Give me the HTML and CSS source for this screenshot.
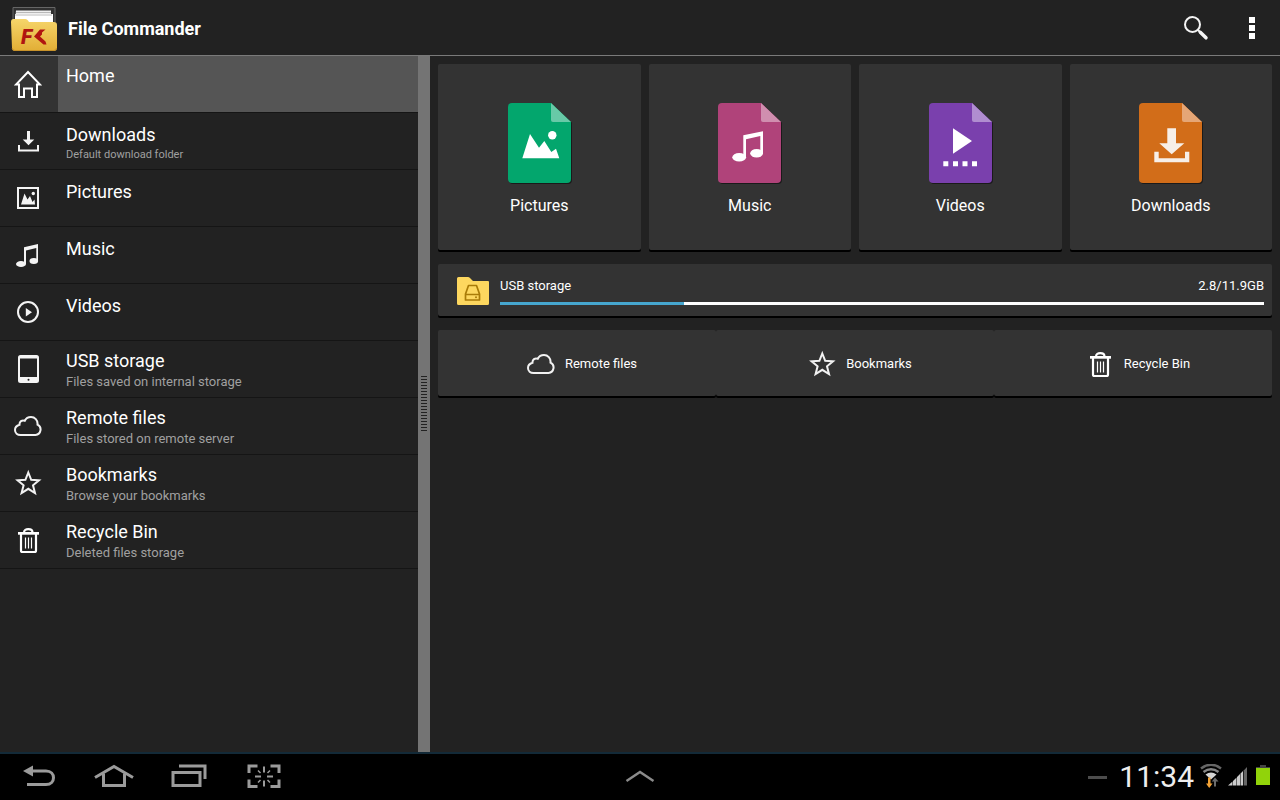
FILE: index.html
```html
<!DOCTYPE html>
<html lang="en">
<head>
<meta charset="utf-8">
<title>File Commander</title>
<link rel="stylesheet" href="styles.css">
</head>
<body>
<svg class="sprite" aria-hidden="true">
  <symbol id="cloud" viewBox="0 0 28 28">
    <path d="M6.500 23H21.500A5.500 5.500 0 0 0 23.500 12.600C24 8 20.700 5 17 5C14 5 11.800 6.700 10.800 8.800C8 7.600 5.200 9.600 5.500 12.700C2.500 13.600 1 15.700 1 18C1 21 3.500 23 6.500 23Z" fill="none" stroke="#f2f2f2" stroke-width="2"/>
  </symbol>
  <symbol id="star" viewBox="0 0 28 28">
    <path d="M14.300 3.500L17.200 10.800L25 11.300L19 16.300L21 24L14.300 19.800L7.600 24L9.600 16.300L3.600 11.300L11.400 10.800Z" fill="none" stroke="#f2f2f2" stroke-width="2"/>
  </symbol>
  <symbol id="bin" viewBox="0 0 28 28">
    <path d="M10 6.500C10 2 18.500 2 18.500 6.500" fill="none" stroke="#fff" stroke-width="2.200"/>
    <path d="M4 6H25V8.700H4Z" fill="#fff"/>
    <path d="M7 8V24.500Q7 26 8.500 26H20.500Q22 26 22 24.500V8" fill="none" stroke="#fff" stroke-width="2.200"/>
    <path d="M11.500 11.500V22.500M14.500 11.500V22.500M17.500 11.500V22.500" stroke="#fff" stroke-width="1.200"/>
  </symbol>
</svg>

<div class="screen">
  <header class="topbar">
    <svg class="logo" viewBox="0 0 46 46" aria-hidden="true">
      <defs>
        <linearGradient id="gold" x1="0" y1="0" x2="0" y2="1">
          <stop offset="0" stop-color="#f6d56a"/><stop offset="1" stop-color="#e2ae35"/>
        </linearGradient>
      </defs>
      <path d="M2 14V1.500H44V16" fill="#303030" stroke="#666" stroke-width="1"/>
      <path d="M5 4.500H40V18H4Z" fill="#eee"/>
      <path d="M4 8H42V20H4Z" fill="#fff"/>
      <path d="M5 6.500H40M4 9H41" stroke="#aaa" stroke-width=".8"/>
      <path d="M0 16Q0 13 2.500 13H14.500Q16 13 17 14.500L18 16H43Q46 16 46 19V42Q46 45 43 45H4Q1 45 1 42Z" fill="url(#gold)"/>
      <path d="M1 42Q2 44.500 4 44.500H43Q45 44 45.500 42" fill="none" stroke="#c8922a"/>
      <text class="logo-letter" x="10" y="38" fill="#b01510">F</text>
      <path d="M34.500 23.500H29L23 30.500L32.500 38.500H35.500L34.500 35.500L29 30.500L31 28.500V26.500Z" fill="#b01510"/>
    </svg>
    <h1 class="app-title">File Commander</h1>
    <div class="top-actions">
      <button class="top-button" aria-label="Search">
        <svg width="26" height="26" viewBox="0 0 26 26"><circle cx="9.500" cy="9.500" r="7.500" fill="none" stroke="#f4f4f4" stroke-width="2"/><path d="M14.500 14.500L17.500 17.500" stroke="#f4f4f4" stroke-width="2"/><path d="M17.300 17.300L23 22.800" stroke="#f4f4f4" stroke-width="3.500" stroke-linecap="round"/></svg>
      </button>
      <button class="top-button" aria-label="More options">
        <svg width="6" height="22" viewBox="0 0 6 22"><path d="M0 0H6V6H0ZM0 8H6V14H0ZM0 16H6V22H0Z" fill="#fff"/></svg>
      </button>
    </div>
  </header>

  <div class="workspace">
    <nav class="sidebar" aria-label="Locations">
      <a class="place place-active" href="#home">
        <span class="place-icon"><svg viewBox="0 0 28 28"><path d="M14 2L26 14.500H23V27H18V18.500H10V27H5V14.500H2Z" fill="none" stroke="#fff" stroke-width="2"/></svg></span>
        <span class="place-text place-single"><span class="place-title">Home</span></span>
      </a>
      <a class="place" href="#downloads">
        <span class="place-icon"><svg viewBox="0 0 28 28"><path d="M13 4H16V12.500H20.300L14.500 18.300L8.700 12.500H13Z" fill="#f4f4f4"/><path d="M5 18V23.500H24V18" fill="none" stroke="#f4f4f4" stroke-width="2"/></svg></span>
        <span class="place-text place-compact"><span class="place-title">Downloads</span><span class="place-note">Default download folder</span></span>
      </a>
      <a class="place" href="#pictures">
        <span class="place-icon"><svg viewBox="0 0 28 28"><path d="M4 4H24V24H4Z" fill="none" stroke="#f4f4f4" stroke-width="2"/><path d="M7 20.500L10.500 9.500L13.500 15.500L16 12L18.500 18L20.500 15.500L21 20.500Z" fill="#f4f4f4"/><circle cx="19.300" cy="9.500" r="1.700" fill="#f4f4f4"/></svg></span>
        <span class="place-text place-single"><span class="place-title">Pictures</span></span>
      </a>
      <a class="place" href="#music">
        <span class="place-icon"><svg viewBox="0 0 28 28"><path d="M10 6.300L24 3V20H22.300V7L12 9.500V23H10Z" fill="#f4f4f4"/><ellipse cx="7" cy="23" rx="5" ry="3" fill="#f4f4f4"/><ellipse cx="19.800" cy="20" rx="4.300" ry="3" fill="#f4f4f4"/></svg></span>
        <span class="place-text place-single"><span class="place-title">Music</span></span>
      </a>
      <a class="place" href="#videos">
        <span class="place-icon"><svg viewBox="0 0 28 28"><circle cx="14" cy="14" r="10" fill="none" stroke="#f4f4f4" stroke-width="2"/><path d="M11.800 10L18 14.200L11.800 18.400Z" fill="#f4f4f4"/></svg></span>
        <span class="place-text place-single"><span class="place-title">Videos</span></span>
      </a>
      <a class="place" href="#usb">
        <span class="place-icon"><svg viewBox="0 0 28 28"><path fill-rule="evenodd" d="M6.500 0H22.500Q25 0 25 2.500V25.500Q25 28 22.500 28H6.500Q4 28 4 25.500V2.500Q4 0 6.500 0ZM6 3.500V22H23V3.500Z" fill="#f4f4f4"/><circle cx="14.500" cy="24.700" r="1" fill="#222"/></svg></span>
        <span class="place-text"><span class="place-title">USB storage</span><span class="place-note">Files saved on internal storage</span></span>
      </a>
      <a class="place" href="#remote">
        <span class="place-icon"><svg viewBox="0 0 28 28"><use href="#cloud"/></svg></span>
        <span class="place-text"><span class="place-title">Remote files</span><span class="place-note">Files stored on remote server</span></span>
      </a>
      <a class="place" href="#bookmarks">
        <span class="place-icon"><svg viewBox="0 0 28 28"><use href="#star"/></svg></span>
        <span class="place-text"><span class="place-title">Bookmarks</span><span class="place-note">Browse your bookmarks</span></span>
      </a>
      <a class="place" href="#recycle">
        <span class="place-icon"><svg viewBox="0 0 28 28"><use href="#bin"/></svg></span>
        <span class="place-text"><span class="place-title">Recycle Bin</span><span class="place-note">Deleted files storage</span></span>
      </a>
    </nav>

    <div class="splitter"><span class="grip"></span></div>

    <main class="content">
      <div class="tiles">
        <button class="tile panel">
          <svg class="file-icon" viewBox="0 0 63 80"><path d="M4 0H43L63 19V76Q63 80 59 80H4Q0 80 0 76V4Q0 0 4 0Z" fill="#03a66d"/><path d="M43 0L63 19H45Q43 19 43 17Z" fill="#68c9a7"/><path d="M14.300 55.300L22 31L31 44.700L36.300 38L43.300 49L48 45.700L51.300 55.300Z" fill="#fff"/><circle cx="44.300" cy="32.300" r="4.200" fill="#fff"/></svg>
          <span>Pictures</span>
        </button>
        <button class="tile panel">
          <svg class="file-icon" viewBox="0 0 63 80"><path d="M4 0H43L63 19V76Q63 80 59 80H4Q0 80 0 76V4Q0 0 4 0Z" fill="#b0437a"/><path d="M43 0L63 19H45Q43 19 43 17Z" fill="#d08eaf"/><path d="M25.300 32.300L45 28.300V51H42.300V33L28 36.300V54H25.300Z" fill="#fff"/><ellipse cx="21.200" cy="54.300" rx="6.900" ry="4.300" fill="#fff"/><ellipse cx="38.600" cy="50.300" rx="6.400" ry="4.300" fill="#fff"/></svg>
          <span>Music</span>
        </button>
        <button class="tile panel">
          <svg class="file-icon" viewBox="0 0 63 80"><path d="M4 0H43L63 19V76Q63 80 59 80H4Q0 80 0 76V4Q0 0 4 0Z" fill="#7a40ad"/><path d="M43 0L63 19H45Q43 19 43 17Z" fill="#b08dd0"/><path d="M24 25.300L43 38L24 50.700ZM14.300 58.300H19.300V63.300H14.300ZM24 58.300H29V63.300H24ZM33.500 58.300H38.500V63.300H33.500ZM43 58.300H48V63.300H43Z" fill="#fff"/></svg>
          <span>Videos</span>
        </button>
        <button class="tile panel">
          <svg class="file-icon" viewBox="0 0 63 80"><path d="M4 0H43L63 19V76Q63 80 59 80H4Q0 80 0 76V4Q0 0 4 0Z" fill="#d26d19"/><path d="M43 0L63 19H45Q43 19 43 17Z" fill="#e5a676"/><path d="M28.300 25.300H37V40.300H45.300L32.700 51.300L20.300 40.300H28.300ZM15.300 48.700H19.700V55.300H46V48.700H50.300V59.300H15.300Z" fill="#f7efe8"/></svg>
          <span>Downloads</span>
        </button>
      </div>

      <section class="storage panel">
        <svg class="storage-icon" viewBox="0 0 32 28" aria-hidden="true"><path d="M1.500 0H11Q12 0 13 1L16 4H31Q32 4 32 5V26.500Q32 28 30.500 28H1.500Q0 28 0 26.500V1.500Q0 0 1.500 0Z" fill="#fdd75f"/><path d="M11.500 8.500H19.500L22.500 17V23H8.500V17ZM8.500 17.500H22.500" fill="none" stroke="#a97b08" stroke-width="1.700" stroke-linejoin="round"/><circle cx="19" cy="20.300" r="1" fill="#a97b08"/></svg>
        <div class="storage-body">
          <div class="storage-line"><label for="usage">USB storage</label><span>2.8/11.9GB</span></div>
          <progress id="usage" class="usage" value="24.1" max="100"></progress>
        </div>
      </section>

      <div class="shortcuts">
        <button class="shortcut panel"><svg viewBox="0 0 28 28"><use href="#cloud"/></svg><span>Remote files</span></button>
        <button class="shortcut panel"><svg viewBox="0 0 28 28"><use href="#star"/></svg><span>Bookmarks</span></button>
        <button class="shortcut panel"><svg viewBox="0 0 28 28"><use href="#bin"/></svg><span>Recycle Bin</span></button>
      </div>
    </main>
  </div>

  <footer class="systembar">
    <div class="system-keys">
      <button class="key" aria-label="Back"><svg width="34" height="26" viewBox="0 0 34 26"><path d="M10 7H24C34 7 34 20.500 24 20.500H5" fill="none" stroke="#9b9b9b" stroke-width="3"/><path d="M1 7L11 1.500V12.500Z" fill="#9b9b9b"/></svg></button>
      <button class="key" aria-label="Home"><svg width="40" height="26" viewBox="0 0 40 26"><path d="M1 13.500L20 2.500L39 13.500" fill="none" stroke="#9b9b9b" stroke-width="3"/><path d="M9.500 9.500V21.500H30.500V9.500" fill="none" stroke="#9b9b9b" stroke-width="3"/></svg></button>
      <button class="key" aria-label="Recent apps"><svg width="36" height="26" viewBox="0 0 36 26"><path d="M2 8.500H29V21.500H2Z" fill="none" stroke="#9b9b9b" stroke-width="3"/><path d="M8 2H34V15" fill="none" stroke="#9b9b9b" stroke-width="3"/></svg></button>
      <button class="key" aria-label="Screenshot"><svg width="34" height="26" viewBox="0 0 34 26"><path d="M2 9V2H10.500M23.500 2H32V9M32 15.500V22.500H23.500M10.500 22.500H2V15.500" fill="none" stroke="#9b9b9b" stroke-width="3"/><path d="M17 2.500V8.500M17 16.500V22.500M8 12.500H14M20 12.500H26" stroke="#9b9b9b" stroke-width="2"/><path d="M11 6.500L13.500 9M23 6.500L20.500 9M11 18.500L13.500 16M23 18.500L20.500 16" stroke="#9b9b9b" stroke-width="1.500"/></svg></button>
    </div>
    <button class="key" aria-label="Show mini apps"><svg width="30" height="26" viewBox="0 0 30 26"><path d="M1.500 17L15 8L28.500 17" fill="none" stroke="#8b8b8b" stroke-width="2.400"/></svg></button>
    <div class="status">
      <svg class="dash" width="19" height="3" viewBox="0 0 19 3"><path d="M0 0H19V3H0Z" fill="#4c4c4c"/></svg>
      <time class="clock">11:34</time>
      <svg width="22" height="26" viewBox="0 0 22 26"><path d="M1 4.500Q11 -3 21 4.500" fill="none" stroke="#666" stroke-width="2.500"/><path d="M3.500 8Q11 2.500 18.500 8" fill="none" stroke="#858585" stroke-width="2.500"/><path d="M5.500 10.500Q11 6.500 16.500 10.500L11 15.500Z" fill="#d4d4d4"/><path d="M8 13.500H10.500V19.500H12.500L9.200 24L6 19.500H8Z" fill="#f3a235"/><path d="M15 13.500L18.500 17.500H16V22.500H14V17.500H11.800Z" fill="#6c6c6c"/></svg>
      <svg width="20" height="26" viewBox="0 0 20 26"><path d="M0 21.500L4.500 17.500V21.500ZM5 17L8.500 13.500V21.500H5ZM9 13L12 10V21.500H9ZM12.500 9.500L15 7V21.500H12.500Z" fill="#ccc"/><path d="M15.700 6.500L19 3V21.500H15.700Z" fill="#666"/></svg>
      <svg class="battery" width="14" height="26" viewBox="0 0 14 26"><path d="M4 1H10V3H14V5H0V3H4Z" fill="#444"/><path d="M0 4H14V21H0Z" fill="#91d30a"/></svg>
    </div>
  </footer>
</div>
</body>
</html>
```
FILE: styles.css
```css
* {
  box-sizing: border-box;
}

body {
  margin: 0;
  background: #222;
  color: #fff;
  font-family: Roboto, "Liberation Sans", sans-serif;
}

button {
  margin: 0;
  padding: 0;
  border: 0;
  background: none;
  color: inherit;
  font: inherit;
}

svg {
  display: block;
  flex: none;
}

.sprite {
  display: none;
}

.screen {
  display: flex;
  flex-direction: column;
  min-height: 100vh;
}

/* Top bar */

.topbar {
  display: flex;
  align-items: center;
  height: 56px;
  padding: 2px 0 0 11px;
  border-bottom: 1px solid #7a7a7a;
}

.logo {
  width: 46px;
  height: 46px;
}

.logo-letter {
  font: italic 900 21px Roboto, sans-serif;
}

.app-title {
  flex: 1;
  margin: 0 0 0 11px;
  font-size: 18px;
  line-height: 24px;
  font-weight: 700;
}

.top-actions {
  display: flex;
}

.top-button {
  display: grid;
  place-items: center;
  width: 56px;
  height: 48px;
  padding-bottom: 2px;
}

/* Body */

.workspace {
  display: flex;
  flex: 1;
}

.sidebar {
  flex: 0 1 418px;
}

.place {
  display: flex;
  height: 57px;
  border-bottom: 1px solid #151515;
  color: #fff;
  text-decoration: none;
}

.place-icon {
  display: grid;
  place-items: center;
  width: 58px;
  padding-right: 2px;
}

.place-icon svg,
.shortcut svg {
  width: 28px;
  height: 28px;
}

.place-text {
  display: flex;
  flex: 1;
  flex-direction: column;
  padding: 8px;
}

.place-single {
  padding-top: 10px;
}

.place-active .place-icon {
  background: #333;
}

.place-active .place-text {
  padding-top: 8px;
  background: #555;
}

.place-title {
  font-size: 18px;
  line-height: 24px;
}

.place-note {
  color: #a0a0a0;
  font-size: 13px;
  line-height: 18px;
}

.place-compact {
  padding-top: 10px;
}

.place-compact .place-note {
  font-size: 11px;
  line-height: 16px;
}

.splitter {
  display: grid;
  place-items: center;
  width: 12px;
  background: #747474;
}

.grip {
  width: 6px;
  height: 56px;
  background: repeating-linear-gradient(#222 0 1px, #747474 1px 3px);
}

.content {
  display: flex;
  flex: 1;
  flex-direction: column;
  gap: 14px;
  padding: 8px;
}

.panel {
  background: #333;
  border-radius: 2px;
  box-shadow: 0 2px 0 #000;
}

.tiles {
  display: grid;
  grid-template-columns: repeat(4, 1fr);
  gap: 8px;
}

.tile {
  display: flex;
  flex-direction: column;
  align-items: center;
  gap: 13px;
  padding: 39px 0 34px;
  font-size: 16px;
  line-height: 20px;
}

.file-icon {
  width: 63px;
  height: 80px;
  filter: drop-shadow(1px 1px 0 #1a1a1a);
}

.storage {
  display: flex;
  align-items: center;
  gap: 11px;
  height: 52px;
  padding: 2px 8px 0 19px;
  font-size: 13px;
  line-height: 16px;
}

.storage-icon {
  width: 32px;
  height: 28px;
}

.storage-body {
  display: flex;
  flex: 1;
  flex-direction: column;
  gap: 8px;
}

.storage-line {
  display: flex;
  justify-content: space-between;
}

.usage {
  display: block;
  width: 100%;
  height: 3px;
  border: 0;
  background: #fff;
  appearance: none;
}

.usage::-webkit-progress-bar {
  background: #fff;
}

.usage::-webkit-progress-value {
  background: #46a6cf;
}

.usage::-moz-progress-bar {
  background: #46a6cf;
}

.shortcuts {
  display: grid;
  grid-template-columns: repeat(3, 1fr);
}

.shortcut {
  display: flex;
  align-items: center;
  justify-content: center;
  gap: 10px;
  height: 66px;
  padding: 2px 0 0 10px;
  font-size: 13px;
  line-height: 18px;
}

/* System bar */

.systembar {
  display: grid;
  grid-template-columns: 1fr auto 1fr;
  align-items: center;
  height: 48px;
  border-top: 2px solid #132a38;
  background: #000;
}

.system-keys {
  display: flex;
}

.key {
  display: grid;
  place-items: center;
  width: 75px;
  height: 46px;
}

.system-keys .key:first-child {
  width: 76px;
  padding-left: 2px;
}

.status {
  display: flex;
  align-items: center;
  justify-content: flex-end;
  gap: 6px;
  padding-right: 10px;
}

.battery {
  margin-left: 2px;
}

.dash {
  margin-right: 6px;
}

.clock {
  color: #eee;
  font-size: 30px;
  line-height: 36px;
}
```
